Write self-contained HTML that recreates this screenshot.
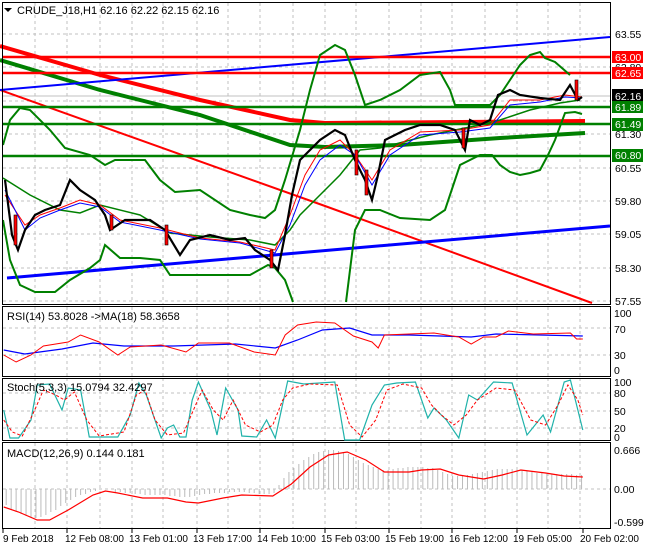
<!DOCTYPE html>
<html><head><meta charset="utf-8"><style>
html,body{margin:0;padding:0;background:#fff;}
svg{display:block;font-family:"Liberation Sans",sans-serif;}
</style></head><body>
<svg width="650" height="550" viewBox="0 0 650 550" xmlns="http://www.w3.org/2000/svg">
<rect width="650" height="550" fill="#fff"/>
<g stroke="#c0c0c0" stroke-dasharray="3,3" stroke-width="1">
<path d="M35 3V304M67 3V304M100 3V304M132 3V304M163 3V304M197 3V304M228 3V304M260 3V304M293 3V304M325 3V304M356 3V304M389 3V304M421 3V304M452 3V304M485 3V304M517 3V304M548 3V304M580 3V304"/>
<path d="M3 34H610M3 67H610M3 101H610M3 134H610M3 168H610M3 201H610M3 234H610M3 268H610M3 301H610"/>
<path d="M35 307V376M67 307V376M100 307V376M132 307V376M163 307V376M197 307V376M228 307V376M260 307V376M293 307V376M325 307V376M356 307V376M389 307V376M421 307V376M452 307V376M485 307V376M517 307V376M548 307V376M580 307V376"/>
<path d="M3 328H610M3 355H610"/>
<path d="M35 378V440M67 378V440M100 378V440M132 378V440M163 378V440M197 378V440M228 378V440M260 378V440M293 378V440M325 378V440M356 378V440M389 378V440M421 378V440M452 378V440M485 378V440M517 378V440M548 378V440M580 378V440"/>
<path d="M3 393H610M3 411H610M3 428H610"/>
<path d="M35 443V529M67 443V529M100 443V529M132 443V529M163 443V529M197 443V529M228 443V529M260 443V529M293 443V529M325 443V529M356 443V529M389 443V529M421 443V529M452 443V529M485 443V529M517 443V529M548 443V529M580 443V529"/>
<path d="M3 489H610"/>
</g>
<line x1="3" y1="96" x2="610" y2="96" stroke="#c0c0c0"/>
<polyline fill="none" stroke="#f00" stroke-width="4" points="0,46 100,75 200,100 290,120 325,123 585,121"/>
<polyline fill="none" stroke="#008000" stroke-width="4" points="0,60 100,90 200,115 290,145 325,147 400,145 500,138 585,133"/>
<polyline fill="none" stroke="#f00" stroke-width="2" points="0,90 325,206 592,303"/>
<line x1="0" y1="90" x2="610" y2="37" stroke="#00f" stroke-width="2"/>
<line x1="7" y1="278" x2="610" y2="226" stroke="#00f" stroke-width="3"/>
<g stroke-width="2.5"><line x1="3" y1="57" x2="610" y2="57" stroke="#f00"/>
<line x1="3" y1="73" x2="610" y2="73" stroke="#f00"/>
<line x1="3" y1="107" x2="610" y2="107" stroke="#008000"/>
<line x1="3" y1="124" x2="610" y2="124" stroke="#008000"/>
<line x1="3" y1="156" x2="610" y2="156" stroke="#008000"/></g>
<g fill="none" stroke="#008000" stroke-width="2">
<polyline points="3,145 10,120 20,108 30,110 50,130 65,148 90,155 105,165 115,160 145,160 160,180 175,192 200,190 230,210 250,215 265,218 275,210 285,180 300,130 310,90 320,55 335,45 345,50 355,75 365,105 380,100 400,90 420,75 440,72 450,90 455,105 490,105 500,95 510,80 520,65 530,55 540,52 545,58 555,62 570,75"/>
<polyline points="3,220 10,260 20,285 35,292 55,292 70,280 90,268 100,260 105,245 120,258 140,258 160,260 170,275 210,275 250,275 268,265 275,268 285,280 293,302"/>
<polyline points="346,302 350,270 355,230 365,210 380,210 400,218 430,220 445,210 460,165 480,155 492,155 500,165 510,172 520,175 530,173 540,170 548,155 555,140 565,113 575,112 582,114"/>
<polyline stroke-width="1.5" points="3,178 30,195 60,210 80,213 100,205 140,215 170,233 210,237 250,240 275,245 290,230 300,215 320,195 340,175 360,150 380,148 430,135 480,125 500,120 530,110 560,103 580,100"/>
</g>
<polyline fill="none" stroke="#f00" stroke-width="1" points="5,195 25,225 40,215 60,208 80,200 100,205 120,220 160,228 200,238 240,242 275,250 290,215 305,175 320,150 340,140 355,155 372,180 390,150 420,132 460,130 490,125 510,100 540,100 565,95 582,97"/>
<polyline fill="none" stroke="#00f" stroke-width="1" points="5,190 25,230 40,218 60,210 80,203 100,207 120,222 160,230 200,239 240,243 275,253 290,225 305,185 320,160 340,145 355,155 372,185 390,155 420,135 460,132 490,128 510,105 540,102 565,97 582,98"/>
<polyline fill="none" stroke="#000" stroke-width="2.2" points="5,180 12,235 18,250 25,230 35,215 45,210 60,205 70,180 80,190 95,200 105,215 110,230 125,220 150,220 165,230 180,255 190,240 210,235 230,240 245,238 255,250 270,260 278,270 285,235 292,195 300,160 310,150 320,140 335,130 345,135 355,160 365,180 372,200 378,175 385,140 395,135 405,130 420,125 440,125 455,130 465,150 470,120 480,125 490,120 498,95 510,90 520,95 540,98 560,100 570,85 578,100 582,97"/>
<g fill="#f00" stroke="#000" stroke-width="0.6">
<rect x="14" y="215" width="3" height="30"/><rect x="110" y="215" width="3" height="15"/><rect x="165" y="225" width="3" height="20"/><rect x="270" y="250" width="3" height="18"/><rect x="355" y="150" width="3" height="25"/><rect x="365" y="170" width="3" height="25"/><rect x="462" y="128" width="3" height="20"/><rect x="575" y="80" width="3" height="20"/>
</g>
<g fill="none" stroke="#000" stroke-width="1">
<rect x="2.5" y="2.5" width="608" height="302"/>
<rect x="2.5" y="306.5" width="608" height="70"/>
<rect x="2.5" y="378.5" width="608" height="62"/>
<rect x="2.5" y="442.5" width="608" height="86"/>
</g>
<g transform="scale(1.24,1)" fill="none">
<polyline vector-effect="non-scaling-stroke" stroke="#00f" stroke-width="1.2" points="3,350 20,354 50,349 75,343 100,346 140,346 190,344 222,348 240,340 260,330 282,328 300,335 330,335 380,337 400,334 470,336"/>
<polyline vector-effect="non-scaling-stroke" stroke="#f00" stroke-width="1" points="3,355 13,362 25,355 35,346 55,342 65,335 80,342 95,355 105,347 130,345 150,352 160,343 185,343 205,352 222,355 230,335 240,325 255,322 270,323 285,336 300,342 305,348 310,335 330,334 350,333 370,337 380,344 390,337 400,337 410,331 430,334 460,333 465,339 470,339"/>
<polyline vector-effect="non-scaling-stroke" stroke="#20b2aa" stroke-width="1.2" points="3,410 8,438 15,438 25,420 30,385 40,384 50,410 55,388 65,390 72,437 95,437 105,415 112,383 118,395 130,438 135,428 140,425 145,437 150,437 155,400 160,382 170,410 175,435 182,388 192,410 195,436 207,437 215,420 222,438 232,381 245,384 270,382 278,440 290,440 300,405 310,385 320,383 335,382 345,418 350,408 360,420 370,438 378,395 385,400 398,382 413,383 425,435 438,415 444,432 455,382 460,380 470,430"/>
<polyline vector-effect="non-scaling-stroke" stroke="#f00" stroke-width="1" stroke-dasharray="3,2" points="3,420 10,432 18,436 28,410 35,390 45,395 52,400 60,392 70,420 80,436 100,432 110,395 117,390 125,420 135,435 148,433 156,410 163,390 172,410 180,420 188,400 198,425 210,432 220,425 228,400 236,388 250,384 272,385 282,425 292,437 303,420 312,390 325,384 340,388 348,405 356,415 366,425 376,415 385,400 400,388 415,390 428,420 440,425 450,405 458,385 466,400 470,415"/>
<path vector-effect="non-scaling-stroke" stroke="#bbb" stroke-width="1" d="M5 489V505M9 489V509M13 489V512M17 489V514M21 489V516M25 489V517M29 489V518M33 489V517M37 489V515M41 489V512M45 489V510M49 489V506M53 489V503M57 489V500M61 489V497M65 489V495M69 489V494M73 489V492M77 489V491M93 489V492M97 489V492M101 489V493M105 489V493M109 489V494M113 489V494M117 489V495M121 489V495M125 489V495M129 489V495M133 489V495M137 489V496M141 489V496M145 489V497M149 489V497M153 489V497M157 489V496M161 489V495M165 489V494M169 489V494M173 489V493M177 489V493M181 489V493M185 489V492M189 489V492M193 489V492M197 489V492M201 489V493M205 489V493M209 489V494M213 489V494M217 489V494M221 489V493M225 489V485M229 489V478M233 489V472M237 489V468M241 489V464M245 489V460M249 489V457M253 489V454M257 489V452M261 489V451M265 489V450M269 489V450M273 489V451M277 489V452M281 489V454M285 489V457M289 489V460M293 489V463M297 489V465M301 489V467M305 489V469M309 489V470M313 489V470M317 489V469M321 489V468M325 489V468M329 489V467M333 489V467M337 489V467M341 489V467M345 489V468M349 489V468M353 489V470M357 489V472M361 489V474M365 489V476M369 489V476M373 489V476M377 489V475M381 489V474M385 489V473M389 489V472M393 489V471M397 489V470M401 489V469M405 489V469M409 489V469M413 489V469M417 489V470M421 489V470M425 489V471M429 489V472M433 489V473M437 489V473M441 489V474M445 489V474M449 489V474M453 489V474M457 489V474M461 489V474M465 489V475M469 489V475"/>
<polyline vector-effect="non-scaling-stroke" stroke="#f00" stroke-width="1.2" points="3,507 15,512 30,520 40,520 55,510 75,495 85,491 95,493 115,498 135,498 150,502 160,503 180,498 195,495 220,496 235,484 250,467 265,455 280,452 295,460 310,472 330,472 340,470 355,469 370,475 390,479 405,475 420,470 440,473 455,476 470,477"/>
</g>
<g font-size="11" fill="#000">
<path d="M4 8h8l-4 4z" fill="#000"/>
<text x="17" y="14">CRUDE_J18,H1  62.16 62.22 62.15 62.16</text>
<text x="7" y="320">RSI(14) 53.8028  -&gt;MA(18) 58.3658</text>
<text x="7" y="391">Stoch(5,3,3) 15.0794 32.4297</text>
<text x="7" y="457">MACD(12,26,9) 0.144 0.181</text>
<g font-size="10.5">
<text x="615" y="38">63.55</text><text x="615" y="71">62.80</text><text x="615" y="138">61.30</text><text x="615" y="172">60.55</text><text x="615" y="205">59.80</text><text x="615" y="238">59.05</text><text x="615" y="272">58.30</text><text x="615" y="305">57.55</text>
<text x="614" y="317">100</text><text x="614" y="333">70</text><text x="614" y="359">30</text><text x="614" y="374">0</text>
<text x="614" y="386">100</text><text x="614" y="397">80</text><text x="614" y="415">50</text><text x="614" y="432">20</text><text x="614" y="441">0</text>
<text x="614" y="454">0.666</text><text x="614" y="493">0.00</text><text x="614" y="526">-0.599</text>
</g>
<g font-size="10">
<text x="3" y="542">9 Feb 2018</text><text x="65" y="542">12 Feb 08:00</text><text x="129" y="542">13 Feb 01:00</text><text x="193" y="542">13 Feb 17:00</text><text x="257" y="542">14 Feb 10:00</text><text x="321" y="542">15 Feb 03:00</text><text x="385" y="542">15 Feb 19:00</text><text x="449" y="542">16 Feb 12:00</text><text x="513" y="542">19 Feb 05:00</text><text x="580" y="542">20 Feb 02:00</text>
</g>
<g stroke="#000"><path d="M3 529v4M67 529v4M132 529v4M197 529v4M260 529v4M325 529v4M389 529v4M452 529v4M517 529v4M583 529v4"/></g>
</g>
<g font-size="10.5" fill="#fff">
<rect x="612" y="51" width="31" height="12" fill="#f00"/><text x="615" y="61">63.00</text>
<rect x="612" y="67" width="31" height="12" fill="#f00"/><text x="615" y="77">62.65</text>
<rect x="612" y="89" width="31" height="13" fill="#000"/><text x="615" y="100">62.16</text>
<rect x="612" y="101" width="31" height="12" fill="#008000"/><text x="615" y="111">61.89</text>
<rect x="612" y="118" width="31" height="13" fill="#008000"/><text x="615" y="128">61.49</text>
<rect x="612" y="149" width="31" height="13" fill="#008000"/><text x="615" y="159">60.80</text>
</g>
</svg>
</body></html>
